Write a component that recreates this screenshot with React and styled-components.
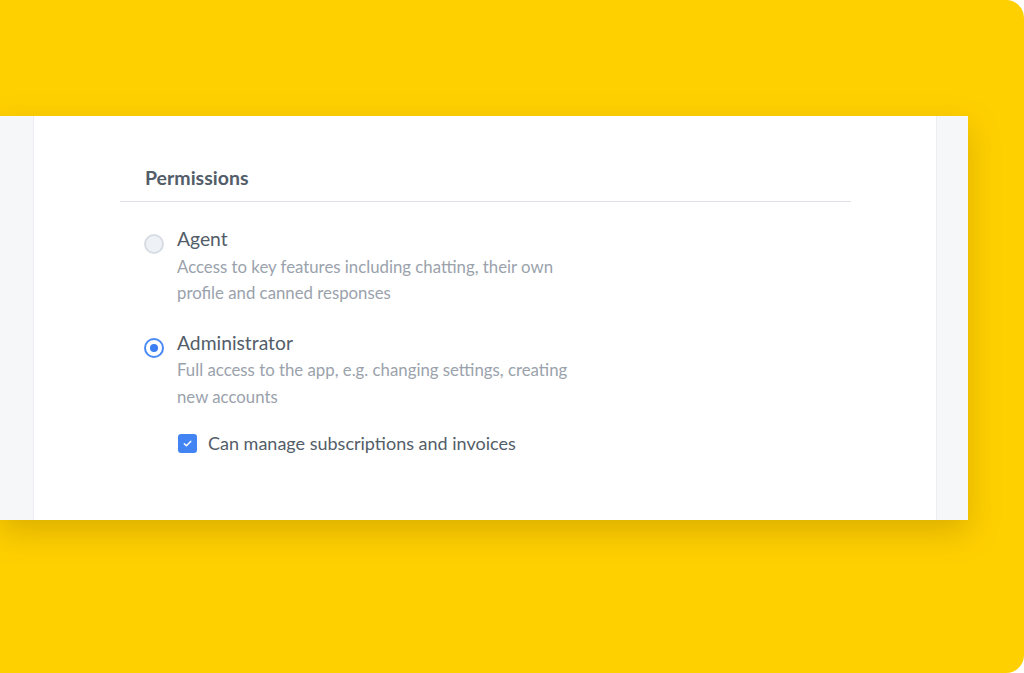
import React from 'react'
import styled, { createGlobalStyle } from 'styled-components'

const Global = createGlobalStyle`
  html, body {
    margin: 0;
    padding: 0;
    background: #ffffff;
  }
  body {
    font-family: Lato, "Open Sans", sans-serif;
    -webkit-font-smoothing: antialiased;
  }
`

function Option(props) {
  return (
    <OptionRow>
      <Radio checked={props.checked} />
      <OptionBody>
        <OptionLabel>{props.label}</OptionLabel>
        <OptionText>{props.children}</OptionText>
        {props.extra}
      </OptionBody>
    </OptionRow>
  )
}

function App() {
  return (
    <Frame>
      <Global />
      <Card>
        <Side />
        <Main>
          <Section>
            <Heading>Permissions</Heading>
            <Options>
              <Option label="Agent">
                Access to key features including chatting, their own
                <br />
                profile and canned responses
              </Option>
              <Option
                checked
                label="Administrator"
                extra={
                  <CheckRow>
                    <Checkbox>
                      <svg width="11" height="11" viewBox="0 0 12 12" fill="none">
                        <path d="M2.5 6.3l2.3 2.2 4.7-4.8" stroke="#fff" strokeWidth="1.6" strokeLinecap="round" strokeLinejoin="round" />
                      </svg>
                    </Checkbox>
                    <CheckLabel>Can manage subscriptions and invoices</CheckLabel>
                  </CheckRow>
                }
              >
                Full access to the app, e.g. changing settings, creating
                <br />
                new accounts
              </Option>
            </Options>
          </Section>
        </Main>
        <Side right />
      </Card>
    </Frame>
  )
}

export default App

const Frame = styled.div`
  width: 1024px;
  height: 673px;
  background: #ffd000;
  border-radius: 0 18px 18px 0;
  padding-top: 116px;
  box-sizing: border-box;
  overflow: hidden;
`
const Card = styled.div`
  width: 968px;
  height: 404px;
  display: flex;
  background: #ffffff;
  box-shadow: 0 12px 30px rgba(110, 80, 0, 0.25);
`
const Side = styled.div`
  width: ${p => (p.right ? '31px' : '33px')};
  flex: none;
  background: #f6f7f9;
  border-left: ${p => (p.right ? '1px solid #eceef2' : 'none')};
  border-right: ${p => (p.right ? 'none' : '1px solid #eceef2')};
`
const Main = styled.div`
  flex: 1;
  padding: 50px 0 0 86px;
`
const Section = styled.div`
  width: 731px;
`
const Heading = styled.h2`
  margin: 0;
  padding: 0 0 11px 25px;
  border-bottom: 1px solid #dde1e7;
  font-size: 19.5px;
  line-height: 24px;
  font-weight: 700;
  color: #535d69;
`
const Options = styled.div`
  display: flex;
  flex-direction: column;
  gap: 24px;
  padding: 25px 0 0 24px;
`
const OptionRow = styled.div`
  display: flex;
  gap: 13px;
`
const Radio = styled.div`
  width: 20px;
  height: 20px;
  margin-top: 7px;
  box-sizing: border-box;
  border-radius: 50%;
  flex: none;
  border: 2px solid ${p => (p.checked ? '#4a8af5' : '#d8dde4')};
  background: ${p => (p.checked ? '#ffffff' : '#eef1f6')};
  display: flex;
  align-items: center;
  justify-content: center;
  &::after {
    content: '';
    display: ${p => (p.checked ? 'block' : 'none')};
    width: 8px;
    height: 8px;
    border-radius: 50%;
    background: #3b7ff3;
  }
`
const OptionBody = styled.div`
  display: flex;
  flex-direction: column;
`
const OptionLabel = styled.div`
  font-size: 19.3px;
  line-height: 24px;
  color: #535d69;
`
const OptionText = styled.div`
  margin-top: 2.5px;
  font-size: 16.8px;
  line-height: 26.6px;
  color: #9aa2ac;
`
const CheckRow = styled.div`
  display: flex;
  align-items: center;
  gap: 11px;
  margin-top: 21px;
  margin-left: 1px;
`
const Checkbox = styled.div`
  width: 19px;
  height: 19px;
  border-radius: 3px;
  background: #4384f5;
  display: flex;
  align-items: center;
  justify-content: center;
`
const CheckLabel = styled.div`
  font-size: 18px;
  line-height: 24px;
  color: #535d69;
`
